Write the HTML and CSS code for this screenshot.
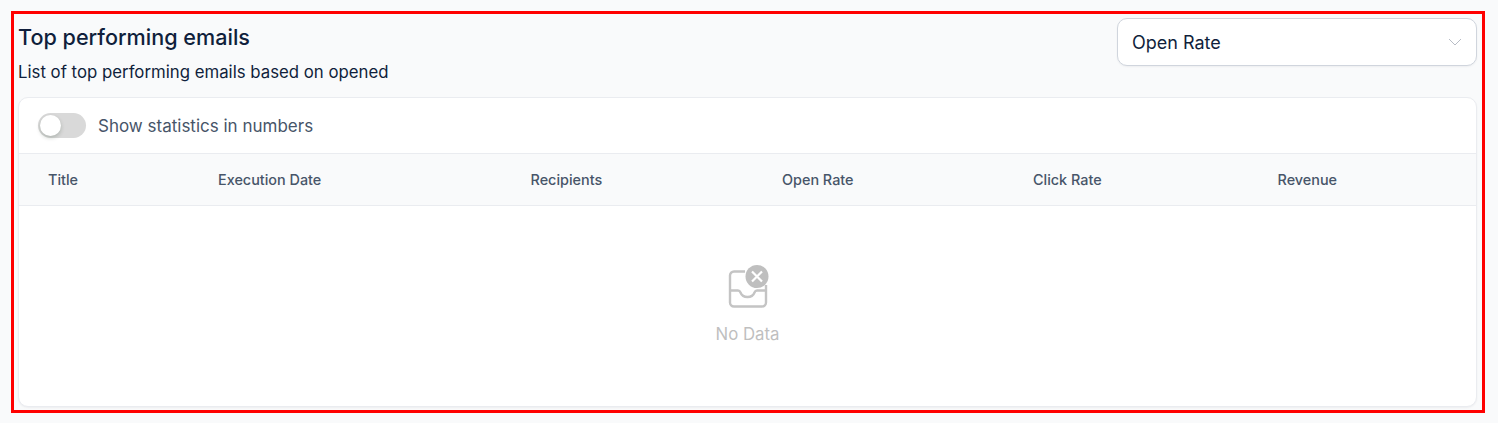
FILE: index.html
```html
<!DOCTYPE html>
<html lang="en">
<head>
    <meta charset="UTF-8">
    <title>Top performing emails</title>
    <link rel="stylesheet" href="styles.css">
</head>
<body>
    <section class="panel">
        <div class="panel-head">
            <div class="panel-titles">
                <h2>Top performing emails</h2>
                <p>List of top performing emails based on opened</p>
            </div>
            <div class="select">
                <span>Open Rate</span>
                <svg width="14" height="8" viewBox="0 0 14 8" fill="none" stroke="#b8bdc6" stroke-width="1"><path d="M1 1l6 6 6-6"/></svg>
            </div>
        </div>
        <div class="card">
            <div class="toolbar">
                <span class="toggle"><span class="knob"></span></span>
                <span class="toggle-label">Show statistics in numbers</span>
            </div>
            <div class="table-head">
                <span>Title</span>
                <span>Execution Date</span>
                <span>Recipients</span>
                <span>Open Rate</span>
                <span>Click Rate</span>
                <span>Revenue</span>
            </div>
            <div class="empty">
                <svg class="empty-icon" width="42" height="46" viewBox="0 0 42 46" fill="none">
                    <path d="M18 6.500H7a4 4 0 0 0-4 4v27a4 4 0 0 0 4 4h28a4 4 0 0 0 4-4V20" stroke="#c4c4c4" stroke-width="2.400"/>
                    <path d="M3 25.500h8c1.500 0 2 .8 2.500 2 .9 2.400 3.200 4.500 7 4.500s6.100-2.100 7-4.500c.5-1.200 1-2 2.500-2h9" stroke="#c4c4c4" stroke-width="2.400"/>
                    <circle cx="30" cy="11.500" r="11.500" fill="#bfbfbf"/>
                    <path d="M25 6.500l10 10M35 6.500l-10 10" stroke="#fff" stroke-width="2.200"/>
                </svg>
                <div class="empty-text">No Data</div>
            </div>
        </div>
    </section>
</body>
</html>
```

FILE: styles.css
```css
* {
    box-sizing: border-box;
}
body {
    margin: 0;
    padding: 11px 13px 10px 11px;
    background: #f9fafb;
    font-family: Inter, "Noto Sans", sans-serif;
}
.panel {
    height: 402px;
    border: 3px solid #ff0000;
    padding: 4px 5px 3px 4px;
    display: flex;
    flex-direction: column;
}
.panel-head {
    display: flex;
    justify-content: space-between;
    height: 79px;
}
.panel-titles h2 {
    margin: 6px 0 0;
    font-size: 21.6px;
    line-height: 26px;
    font-weight: 450;
    color: #101f3c;
}
.panel-titles p {
    margin: 11px 0 0;
    font-size: 16.8px;
    line-height: 22px;
    color: #101f3c;
}
.select {
    width: 360px;
    height: 48px;
    padding: 0 14px;
    display: flex;
    align-items: center;
    justify-content: space-between;
    background: #fff;
    border: 1px solid #d0d5dd;
    border-radius: 10px;
    box-shadow: 0 1px 2px rgba(16, 24, 40, 0.05);
    font-size: 18px;
    line-height: 24px;
    color: #101f3c;
}
.select span {
    padding-top: 1px;
}
.card {
    flex: 1;
    background: #fff;
    border: 1px solid #eaecf0;
    border-radius: 10px;
    box-shadow: 0 1px 2px rgba(16, 24, 40, 0.05);
    display: flex;
    flex-direction: column;
}
.toolbar {
    height: 56px;
    padding: 0 19px;
    display: flex;
    align-items: center;
    gap: 12px;
    border-bottom: 1px solid #eaecf0;
}
.toggle {
    width: 48px;
    height: 25px;
    padding: 2px;
    border-radius: 13px;
    background: #d9d9d9;
}
.knob {
    display: block;
    width: 21px;
    height: 21px;
    border-radius: 50%;
    background: #fff;
    box-shadow: 0 2px 4px rgba(0, 35, 11, 0.2);
}
.toggle-label {
    font-size: 17px;
    color: #475569;
}
.table-head {
    height: 52px;
    padding-left: 29px;
    display: grid;
    grid-template-columns: 170px 312.5px 251.5px 251px 244.5px 1fr;
    align-items: center;
    background: #f9fafb;
    border-bottom: 1px solid #eaecf0;
    font-size: 14.4px;
    font-weight: 450;
    color: #475569;
}
.empty {
    flex: 1;
    display: flex;
    flex-direction: column;
    align-items: center;
    padding-top: 59px;
}
.empty-icon {
    margin-left: 1px;
}
.empty-text {
    margin-top: 11px;
    font-size: 16.8px;
    line-height: 24px;
    color: #bfbfbf;
}
```
